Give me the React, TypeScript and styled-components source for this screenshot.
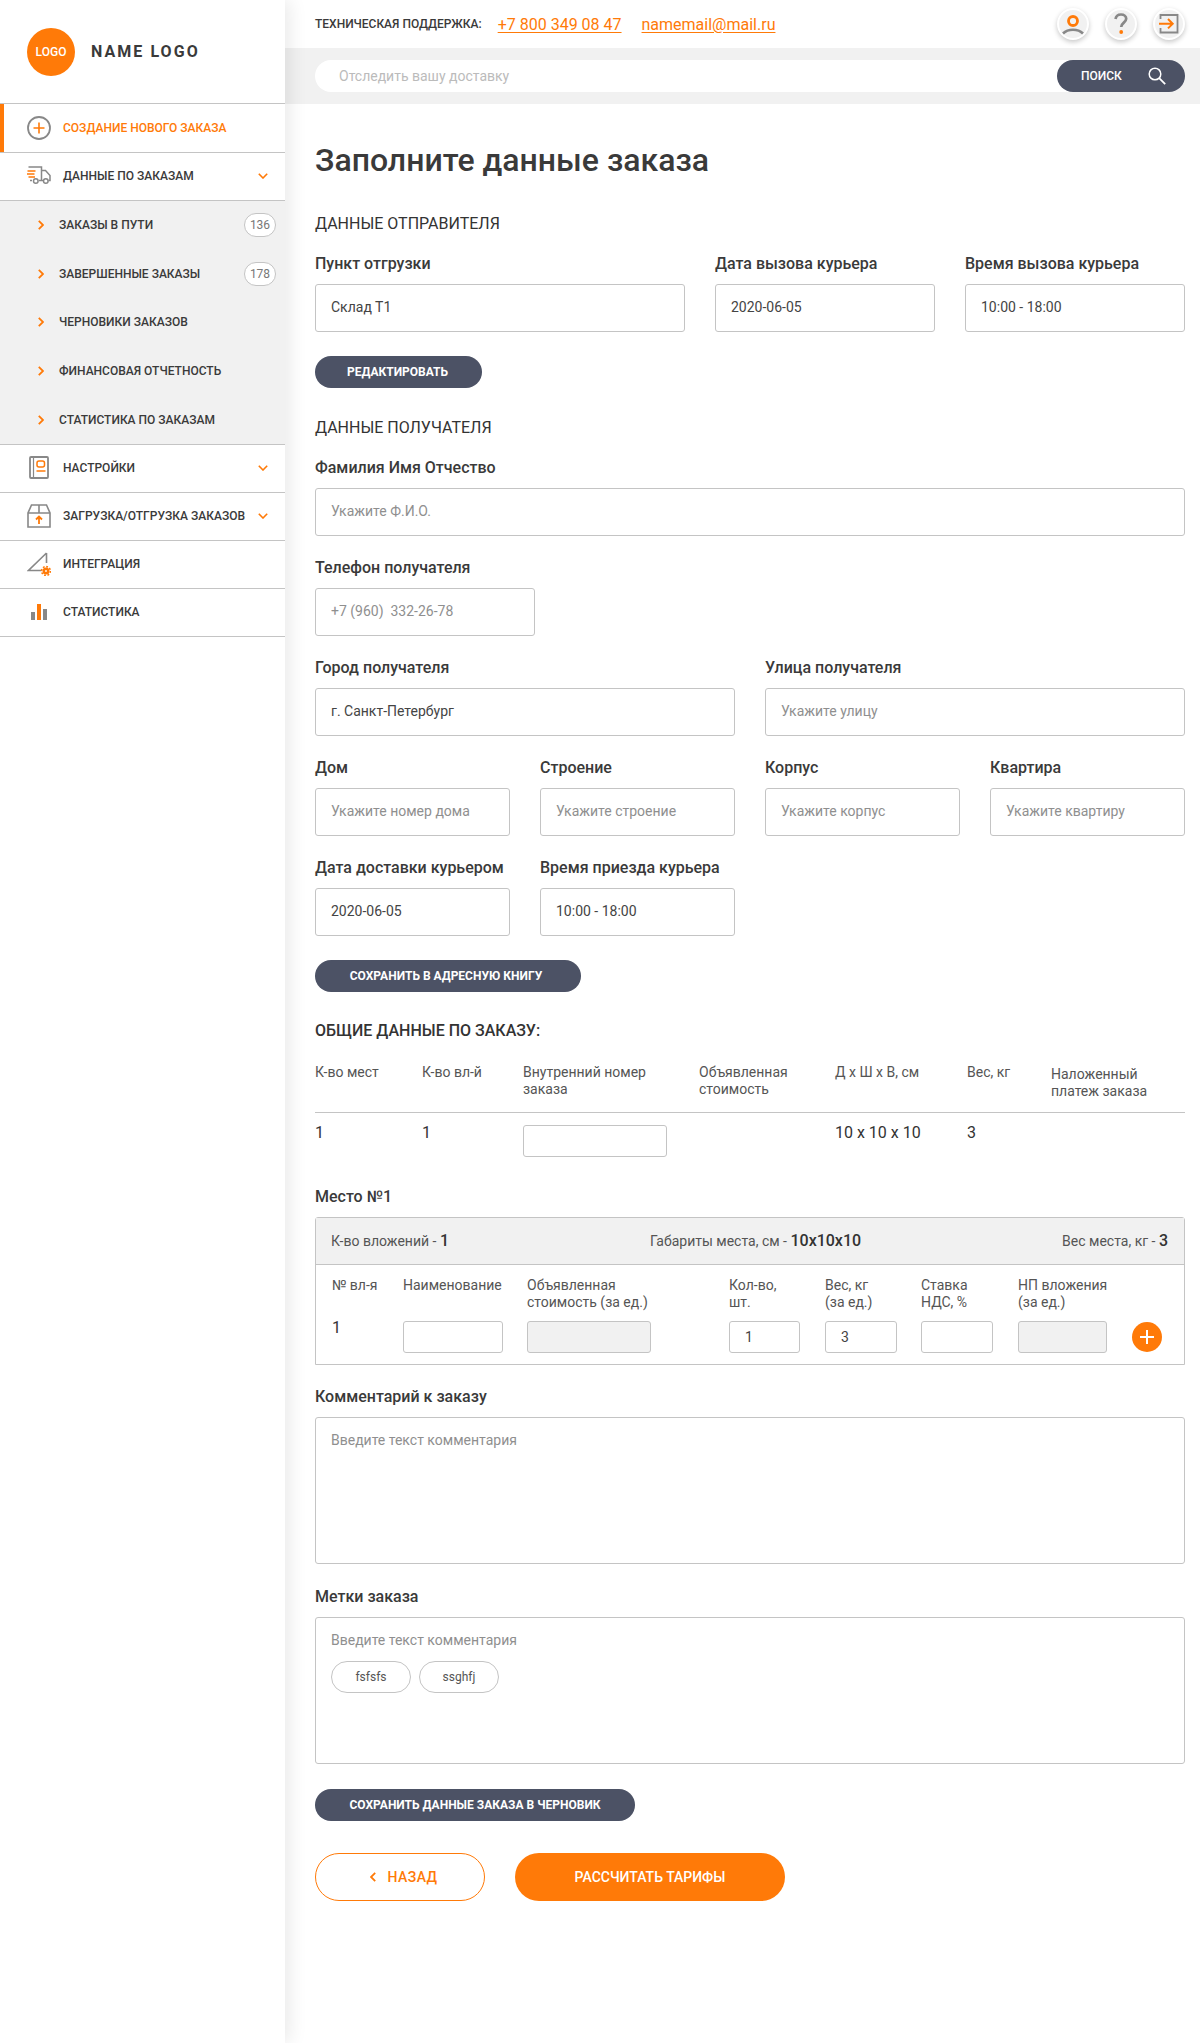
import React from "react";
import styled, { createGlobalStyle } from "styled-components";

const ORANGE = "#ff7a08";
const SLATE = "#4c5265";
const LINE = "#c4c4c4";
const GREY = "#888888";
const INK = "#3a3a3a";

const Global = createGlobalStyle`
  html, body { margin: 0; padding: 0; background: #fff; }
  body { font-family: Roboto, "Liberation Sans", sans-serif; color: ${INK}; }
  * { box-sizing: border-box; }
`;

const Shell = styled.div`
  display: flex;
  width: 1200px;
  min-height: 2043px;
`;
const Sidebar = styled.aside`
  width: 285px;
  flex: none;
  background: #fff;
  box-shadow: 4px 0 18px rgba(0, 0, 0, 0.09);
  position: relative;
  z-index: 2;
`;
const Brand = styled.div`
  height: 104px;
  padding: 28px 0 0 27px;
  display: flex;
  gap: 16px;
  border-bottom: 1px solid ${LINE};
`;
const LogoMark = styled.div`
  width: 48px;
  height: 48px;
  border-radius: 50%;
  background: ${ORANGE};
  color: #fff;
  font-size: 12px;
  font-weight: 500;
  display: flex;
  align-items: center;
  justify-content: center;
`;
const LogoName = styled.div`
  font-size: 16px;
  font-weight: 700;
  letter-spacing: 2.05px;
  line-height: 48px;
  color: ${INK};
`;
const NavRow = styled.div<{ $active?: boolean }>`
  height: ${(p) => (p.$active ? 49 : 48)}px;
  display: flex;
  align-items: center;
  padding: 0 17px ${(p) => (p.$active ? 0 : 2)}px 27px;
  gap: 12px;
  border-bottom: 1px solid ${LINE};
  font-size: 12px;
  font-weight: 500;
  color: ${(p) => (p.$active ? ORANGE : INK)};
  box-shadow: ${(p) => (p.$active ? `inset 4px 0 0 ${ORANGE}` : "none")};
`;
const NavIcon = styled.span`
  width: 24px;
  height: 24px;
  flex: none;
  display: flex;
  align-items: center;
  justify-content: center;
`;
const NavLabel = styled.span`
  flex: 1;
  white-space: nowrap;
`;
const SubPanel = styled.div`
  height: 244px;
  background: #f1f1f1;
  border-bottom: 1px solid ${LINE};
  display: grid;
  grid-auto-rows: 1fr;
`;
const SubRow = styled.div`
  display: flex;
  align-items: center;
  padding: 0 9px 0 38px;
  font-size: 12px;
  font-weight: 500;
  color: ${INK};
`;
const SubLabel = styled.span`
  flex: 1;
  margin-left: 15px;
`;
const Badge = styled.span`
  width: 32px;
  height: 24px;
  border-radius: 12px;
  border: 1px solid ${LINE};
  background: #fff;
  color: #777;
  font-size: 12px;
  font-weight: 400;
  display: flex;
  align-items: center;
  justify-content: center;
`;

const Main = styled.main`
  flex: 1;
  min-width: 0;
`;
const TopBar = styled.div`
  height: 48px;
  padding: 0 15px 0 30px;
  display: flex;
  align-items: center;
`;
const SupportLabel = styled.span`
  font-size: 12px;
  font-weight: 500;
  color: ${INK};
  margin-right: 16px;
`;
const ContactLink = styled.a`
  font-size: 16px;
  color: ${ORANGE};
  text-decoration: underline;
  text-underline-offset: 2px;
  text-decoration-thickness: 1px;
  margin-right: 20px;
`;
const TopIcons = styled.div`
  margin-left: auto;
  display: flex;
  gap: 16px;
`;
const RoundIcon = styled.span`
  width: 32px;
  height: 32px;
  border-radius: 50%;
  background: #f1f1f1;
  border: 2px solid #fff;
  box-shadow: 0 2px 5px rgba(0, 0, 0, 0.22);
  display: flex;
  align-items: center;
  justify-content: center;
`;
const SearchBand = styled.div`
  height: 56px;
  padding: 12px 15px 12px 30px;
  background: #f1f1f1;
`;
const SearchField = styled.div`
  height: 32px;
  border-radius: 16px;
  background: #fff;
  display: flex;
  align-items: center;
  padding-left: 24px;
  font-size: 14px;
  color: #bbb;
`;
const SearchText = styled.span`
  flex: 1;
`;
const SearchButton = styled.span`
  width: 128px;
  height: 32px;
  border-radius: 16px;
  background: ${SLATE};
  color: #fff;
  font-size: 12px;
  font-weight: 500;
  display: flex;
  align-items: center;
  justify-content: space-between;
  padding: 0 19px 0 24px;
`;
const Content = styled.div`
  padding: 36px 15px 0 30px;
`;
const Title = styled.h1`
  margin: 0 0 32px;
  font-size: 32px;
  line-height: 40px;
  font-weight: 500;
  color: ${INK};
`;
const SectionTitle = styled.h2`
  margin: 0 0 16px;
  font-size: 16px;
  line-height: 24px;
  font-weight: 400;
  color: #333;
  text-transform: uppercase;
`;
const GeneralTitle = styled(SectionTitle)`
  font-weight: 500;
  margin-top: -1px;
  margin-bottom: 21px;
`;
const FieldGrid = styled.div<{ $cols: string }>`
  display: grid;
  grid-template-columns: ${(p) => p.$cols};
  column-gap: 30px;
  row-gap: 20px;
`;
const Stack = styled.div`
  display: flex;
  flex-direction: column;
  gap: 20px;
`;
const Field = styled.label<{ $width?: number }>`
  display: block;
  width: ${(p) => (p.$width ? `${p.$width}px` : "auto")};
`;
const FieldLabel = styled.div`
  font-size: 16px;
  line-height: 24px;
  font-weight: 500;
  color: ${INK};
  margin-bottom: 8px;
`;
const TextInput = styled.input`
  display: block;
  width: 100%;
  height: 48px;
  border: 1px solid ${LINE};
  border-radius: 3px;
  padding: 0 15px 2px;
  font: 400 14px Roboto, sans-serif;
  color: #444;
  background: #fff;
  outline: none;
  &::placeholder {
    color: #8f8f8f;
    opacity: 1;
  }
`;
const DarkButton = styled.button<{ $width: number; $nudge?: number; $top?: number }>`
  display: block;
  width: ${(p) => p.$width}px;
  height: 32px;
  border: 0;
  border-radius: 16px;
  background: ${SLATE};
  color: #fff;
  font: 700 12px Roboto, sans-serif;
  padding: 0 ${(p) => p.$nudge ?? 0}px 0 0;
  margin: ${(p) => p.$top ?? 24}px 0 28px;
`;
const SummaryGrid = styled.div`
  display: grid;
  grid-template-columns: 107px 101px 176px 136px 132px 84px 134px;
`;
const SummaryHead = styled.div<{ $drop?: boolean }>`
  height: 49px;
  border-bottom: 1px solid ${LINE};
  font-size: 14px;
  line-height: 17px;
  color: #555;
  padding-top: ${(p) => (p.$drop ? 2 : 0)}px;
`;
const SummaryCell = styled.div`
  padding-top: 10px;
  font-size: 16px;
  line-height: 20px;
  color: #333;
  height: 45px;
`;
const SmallInput = styled.input<{ $w?: number; $off?: boolean }>`
  display: block;
  width: ${(p) => (p.$w ? `${p.$w}px` : "100%")};
  height: 32px;
  border: 1px solid ${LINE};
  border-radius: 3px;
  background: ${(p) => (p.$off ? "#f1f1f1" : "#fff")};
  padding: 0 15px;
  font: 400 14px Roboto, sans-serif;
  color: #444;
  outline: none;
`;
const OrderNumberInput = styled(SmallInput)`
  margin-top: 2px;
`;
const PlaceTitle = styled.div`
  margin-top: 27px;
  font-size: 16px;
  line-height: 24px;
  font-weight: 500;
  color: ${INK};
`;
const PlaceBox = styled.div`
  margin-top: 8px;
  height: 148px;
  border: 1px solid ${LINE};
  border-radius: 3px 3px 0 0;
`;
const PlaceHead = styled.div`
  height: 47px;
  background: #f1f1f1;
  border-bottom: 1px solid ${LINE};
  padding: 0 16px 2px 15px;
  display: flex;
  align-items: center;
  justify-content: space-between;
  font-size: 14px;
  color: #555;
`;
const PlaceValue = styled.span`
  font-size: 16px;
  font-weight: 500;
  color: #333;
`;
const ItemGrid = styled.div`
  padding: 12px 0 0 16px;
  display: grid;
  grid-template-columns: 71px 124px 202px 96px 96px 97px 114px 30px;
  grid-template-rows: 36px 32px;
  row-gap: 8px;
  align-items: start;
`;
const ItemHead = styled.div`
  font-size: 14px;
  line-height: 17px;
  color: #555;
  white-space: pre-line;
`;
const ItemIndex = styled.div`
  font-size: 16px;
  line-height: 20px;
  color: #333;
  margin-top: -3px;
`;
const AddButton = styled.span`
  width: 30px;
  height: 30px;
  margin-top: 1px;
  border-radius: 50%;
  background: ${ORANGE};
  display: flex;
  align-items: center;
  justify-content: center;
`;
const CommentBlock = styled.div`
  margin-top: 20px;
`;
const TagsBlock = styled.div`
  margin-top: 21px;
`;
const TextBox = styled.div`
  height: 147px;
  border: 1px solid ${LINE};
  border-radius: 3px;
  padding: 14px 15px;
  font-size: 14px;
  line-height: 16px;
  color: #8f8f8f;
`;
const Chips = styled.div`
  display: flex;
  gap: 8px;
  margin-top: 13px;
`;
const Chip = styled.span`
  width: 80px;
  height: 32px;
  border-radius: 16px;
  border: 1px solid ${LINE};
  color: #555;
  font-size: 12px;
  display: flex;
  align-items: center;
  justify-content: center;
`;
const Actions = styled.div`
  display: flex;
  gap: 30px;
  margin-top: -28px;
  padding-top: 32px;
`;
const BackButton = styled.button`
  width: 170px;
  height: 48px;
  border-radius: 24px;
  border: 1px solid ${ORANGE};
  background: #fff;
  color: ${ORANGE};
  font: 500 14px Roboto, sans-serif;
  letter-spacing: 0.5px;
  display: flex;
  align-items: center;
  justify-content: center;
  gap: 11px;
  padding: 0 0 0 8px;
`;
const CalcButton = styled.button`
  width: 270px;
  height: 48px;
  border-radius: 24px;
  border: 0;
  background: ${ORANGE};
  color: #fff;
  font: 500 14px Roboto, sans-serif;
`;

const Chevron = ({ dir }: { dir: "down" | "right" | "left" }) => {
  if (dir === "down")
    return (
      <svg width="10" height="6" viewBox="0 0 10 6" fill="none">
        <path d="M.8.8 5 5 9.2.8" stroke={ORANGE} strokeWidth="1.6" />
      </svg>
    );
  return (
    <svg width="6" height="10" viewBox="0 0 6 10" fill="none" style={{ flex: "none" }}>
      <path d={dir === "right" ? "M.8.8 5 5 .8 9.2" : "M5.2.8 1 5l4.2 4.2"} stroke={ORANGE} strokeWidth="1.8" />
    </svg>
  );
};

const PlusCircleIcon = () => (
  <svg width="24" height="24" viewBox="0 0 24 24" fill="none">
    <circle cx="12" cy="12" r="11" stroke={GREY} strokeWidth="1.8" />
    <path d="M12 6.5v11M6.5 12h11" stroke={ORANGE} strokeWidth="1.6" />
  </svg>
);
const TruckIcon = () => (
  <svg width="24" height="19" viewBox="0 0 24 19" fill="none">
    <path d="M1.5 1H14.5V14.5H12M14.5 4.5h4l4.5 5v5h-1.5M14.5 14.5h1.5M3 14.5H5" stroke={GREY} strokeWidth="1.5" />
    <circle cx="8.8" cy="15" r="2.3" stroke={GREY} strokeWidth="1.5" />
    <circle cx="18.8" cy="15" r="2.3" stroke={GREY} strokeWidth="1.5" />
    <path d="M.5 5h8M0 8h7.5M1.5 11H8" stroke={ORANGE} strokeWidth="1.5" />
  </svg>
);
const BookIcon = () => (
  <svg width="20" height="23" viewBox="0 0 20 23" fill="none">
    <rect x="1" y="1" width="18" height="21" rx="1" stroke={GREY} strokeWidth="1.8" />
    <path d="M4.5 1v21" stroke={GREY} strokeWidth="1.2" />
    <rect x="8" y="5" width="7.5" height="6" rx="2" stroke={ORANGE} strokeWidth="1.5" />
    <path d="M7.5 15h9" stroke={ORANGE} strokeWidth="1.5" />
  </svg>
);
const BoxIcon = () => (
  <svg width="24" height="24" viewBox="0 0 24 24" fill="none">
    <path d="M1 9v14h22V9L19.5 1h-15zM1 9h22M12 1v8" stroke={GREY} strokeWidth="1.6" />
    <path d="M12 20v-7M9 15.5l3-3 3 3" stroke={ORANGE} strokeWidth="1.8" />
  </svg>
);
const IntegrationIcon = () => (
  <svg width="24" height="24" viewBox="0 0 24 24" fill="none">
    <path d="M19.5 1 1.5 18.5h13M19.5 1v10" stroke={GREY} strokeWidth="1.6" />
    <circle cx="19" cy="19" r="2.2" stroke={ORANGE} strokeWidth="2.6" />
    <circle cx="19" cy="19" r="4.4" stroke={ORANGE} strokeWidth="1.6" strokeDasharray="1.8 1.6" />
  </svg>
);
const BarsIcon = () => (
  <svg width="16" height="16" viewBox="0 0 16 16">
    <rect x="0" y="8" width="4" height="8" fill={GREY} />
    <rect x="6" y="0" width="4" height="16" fill={ORANGE} />
    <rect x="12" y="5" width="4" height="11" fill={GREY} />
  </svg>
);
const UserIcon = () => (
  <svg width="24" height="24" viewBox="0 0 24 24" fill="none">
    <circle cx="12" cy="9" r="4.5" stroke={ORANGE} strokeWidth="2.8" />
    <path d="M2 21.5c2.8-2.7 6.3-3.8 10-3.8s7.2 1.1 10 3.8" stroke={GREY} strokeWidth="2.6" />
  </svg>
);
const HelpIcon = () => (
  <svg width="18" height="24" viewBox="0 0 18 24" fill="none">
    <path d="M3.5 7C4 4 6.2 2.5 9 2.5c3 0 5.2 1.7 5.2 4.3 0 3.7-5 4-5 8.2" stroke={GREY} strokeWidth="2.7" />
    <circle cx="9.2" cy="20" r="1.9" fill={ORANGE} />
  </svg>
);
const ExitIcon = () => (
  <svg width="20" height="20" viewBox="0 0 20 20" fill="none">
    <path d="M1.5 5V1h17v17.5h-17V14" stroke={GREY} strokeWidth="1.8" />
    <path d="M0 9.7h13M9 5l4.7 4.7L9 14.4" stroke={ORANGE} strokeWidth="2" />
  </svg>
);
const SearchIcon = () => (
  <svg width="18" height="18" viewBox="0 0 18 18" fill="none">
    <circle cx="7" cy="7" r="5.8" stroke="#fff" strokeWidth="1.5" />
    <path d="m11.2 11.2 6 6" stroke="#fff" strokeWidth="1.8" />
  </svg>
);
const WhitePlus = () => (
  <svg width="14" height="14" viewBox="0 0 14 14" fill="none">
    <path d="M7 0v14M0 7h14" stroke="#fff" strokeWidth="2" />
  </svg>
);

const subItems: { label: string; count?: number }[] = [
  { label: "ЗАКАЗЫ В ПУТИ", count: 136 },
  { label: "ЗАВЕРШЕННЫЕ ЗАКАЗЫ", count: 178 },
  { label: "ЧЕРНОВИКИ ЗАКАЗОВ" },
  { label: "ФИНАНСОВАЯ ОТЧЕТНОСТЬ" },
  { label: "СТАТИСТИКА ПО ЗАКАЗАМ" },
];

const F = ({ label, value, placeholder, width }: { label: string; value?: string; placeholder?: string; width?: number }) => (
  <Field $width={width}>
    <FieldLabel>{label}</FieldLabel>
    <TextInput readOnly defaultValue={value} placeholder={placeholder} />
  </Field>
);

export default function App() {
  return (
    <Shell>
      <Global />
      <Sidebar>
        <Brand>
          <LogoMark>LOGO</LogoMark>
          <LogoName>NAME LOGO</LogoName>
        </Brand>
        <NavRow $active>
          <NavIcon><PlusCircleIcon /></NavIcon>
          <NavLabel>СОЗДАНИЕ НОВОГО ЗАКАЗА</NavLabel>
        </NavRow>
        <NavRow>
          <NavIcon><TruckIcon /></NavIcon>
          <NavLabel>ДАННЫЕ ПО ЗАКАЗАМ</NavLabel>
          <Chevron dir="down" />
        </NavRow>
        <SubPanel>
          {subItems.map((s) => (
            <SubRow key={s.label}>
              <Chevron dir="right" />
              <SubLabel>{s.label}</SubLabel>
              {s.count && <Badge>{s.count}</Badge>}
            </SubRow>
          ))}
        </SubPanel>
        <NavRow>
          <NavIcon><BookIcon /></NavIcon>
          <NavLabel>НАСТРОЙКИ</NavLabel>
          <Chevron dir="down" />
        </NavRow>
        <NavRow>
          <NavIcon><BoxIcon /></NavIcon>
          <NavLabel>ЗАГРУЗКА/ОТГРУЗКА ЗАКАЗОВ</NavLabel>
          <Chevron dir="down" />
        </NavRow>
        <NavRow>
          <NavIcon><IntegrationIcon /></NavIcon>
          <NavLabel>ИНТЕГРАЦИЯ</NavLabel>
        </NavRow>
        <NavRow>
          <NavIcon><BarsIcon /></NavIcon>
          <NavLabel>СТАТИСТИКА</NavLabel>
        </NavRow>
      </Sidebar>
      <Main>
        <TopBar>
          <SupportLabel>ТЕХНИЧЕСКАЯ ПОДДЕРЖКА:</SupportLabel>
          <ContactLink>+7 800 349 08 47</ContactLink>
          <ContactLink>namemail@mail.ru</ContactLink>
          <TopIcons>
            <RoundIcon><UserIcon /></RoundIcon>
            <RoundIcon><HelpIcon /></RoundIcon>
            <RoundIcon><ExitIcon /></RoundIcon>
          </TopIcons>
        </TopBar>
        <SearchBand>
          <SearchField>
            <SearchText>Отследить вашу доставку</SearchText>
            <SearchButton>ПОИСК<SearchIcon /></SearchButton>
          </SearchField>
        </SearchBand>
        <Content>
          <Title>Заполните данные заказа</Title>
          <SectionTitle>Данные отправителя</SectionTitle>
          <FieldGrid $cols="370px 220px 220px">
            <F label="Пункт отгрузки" value="Склад Т1" />
            <F label="Дата вызова курьера" value="2020-06-05" />
            <F label="Время вызова курьера" value="10:00 - 18:00" />
          </FieldGrid>
          <DarkButton $width={167} $nudge={2}>РЕДАКТИРОВАТЬ</DarkButton>
          <SectionTitle>Данные получателя</SectionTitle>
          <Stack>
            <F label="Фамилия Имя Отчество" placeholder="Укажите Ф.И.О." />
            <F label="Телефон получателя" placeholder="+7 (960)  332-26-78" width={220} />
            <FieldGrid $cols="420px 420px">
              <F label="Город получателя" value="г. Санкт-Петербург" />
              <F label="Улица получателя" placeholder="Укажите улицу" />
            </FieldGrid>
            <FieldGrid $cols="repeat(4, 195px)">
              <F label="Дом" placeholder="Укажите номер дома" />
              <F label="Строение" placeholder="Укажите строение" />
              <F label="Корпус" placeholder="Укажите корпус" />
              <F label="Квартира" placeholder="Укажите квартиру" />
              <F label="Дата доставки курьером" value="2020-06-05" />
              <F label="Время приезда курьера" value="10:00 - 18:00" />
            </FieldGrid>
          </Stack>
          <DarkButton $width={266} $nudge={4}>СОХРАНИТЬ В АДРЕСНУЮ КНИГУ</DarkButton>
          <GeneralTitle>Общие данные по заказу:</GeneralTitle>
          <SummaryGrid>
            <SummaryHead>К-во мест</SummaryHead>
            <SummaryHead>К-во вл-й</SummaryHead>
            <SummaryHead>Внутренний номер<br />заказа</SummaryHead>
            <SummaryHead>Объявленная<br />стоимость</SummaryHead>
            <SummaryHead>Д х Ш х В, см</SummaryHead>
            <SummaryHead>Вес, кг</SummaryHead>
            <SummaryHead $drop>Наложенный<br />платеж заказа</SummaryHead>
            <SummaryCell>1</SummaryCell>
            <SummaryCell>1</SummaryCell>
            <SummaryCell><OrderNumberInput $w={144} readOnly /></SummaryCell>
            <SummaryCell />
            <SummaryCell>10 х 10 х 10</SummaryCell>
            <SummaryCell>3</SummaryCell>
            <SummaryCell />
          </SummaryGrid>
          <PlaceTitle>Место №1</PlaceTitle>
          <PlaceBox>
            <PlaceHead>
              <span>К-во вложений - <PlaceValue>1</PlaceValue></span>
              <span>Габариты места, см - <PlaceValue>10х10х10</PlaceValue></span>
              <span>Вес места, кг - <PlaceValue>3</PlaceValue></span>
            </PlaceHead>
            <ItemGrid>
              <ItemHead>№ вл-я</ItemHead>
              <ItemHead>Наименование</ItemHead>
              <ItemHead>{"Объявленная\nстоимость (за ед.)"}</ItemHead>
              <ItemHead>{"Кол-во,\nшт."}</ItemHead>
              <ItemHead>{"Вес, кг\n(за ед.)"}</ItemHead>
              <ItemHead>{"Ставка\nНДС, %"}</ItemHead>
              <ItemHead>{"НП вложения\n(за ед.)"}</ItemHead>
              <span />
              <ItemIndex>1</ItemIndex>
              <SmallInput $w={100} readOnly />
              <SmallInput $w={124} $off readOnly />
              <SmallInput $w={71} readOnly defaultValue="1" />
              <SmallInput $w={72} readOnly defaultValue="3" />
              <SmallInput $w={72} readOnly />
              <SmallInput $w={89} $off readOnly />
              <AddButton><WhitePlus /></AddButton>
            </ItemGrid>
          </PlaceBox>
          <CommentBlock>
            <FieldLabel>Комментарий к заказу</FieldLabel>
            <TextBox>Введите текст комментария</TextBox>
          </CommentBlock>
          <TagsBlock>
            <FieldLabel>Метки заказа</FieldLabel>
            <TextBox>
              Введите текст комментария
              <Chips>
                <Chip>fsfsfs</Chip>
                <Chip>ssghfj</Chip>
              </Chips>
            </TextBox>
          </TagsBlock>
          <DarkButton $width={320} $top={25}>СОХРАНИТЬ ДАННЫЕ ЗАКАЗА В ЧЕРНОВИК</DarkButton>
          <Actions>
            <BackButton><Chevron dir="left" />НАЗАД</BackButton>
            <CalcButton>РАССЧИТАТЬ ТАРИФЫ</CalcButton>
          </Actions>
        </Content>
      </Main>
    </Shell>
  );
}
